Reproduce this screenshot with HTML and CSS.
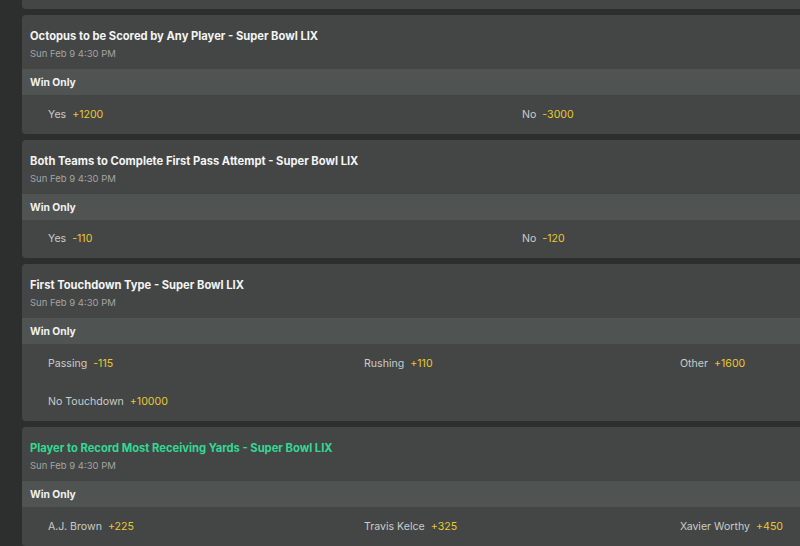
FILE: index.html
```html
<!DOCTYPE html>
<html>
<head>
<meta charset="utf-8">
<link rel="stylesheet" href="styles.css">
</head>
<body>
<div class="page">
  <div class="card card-prev"></div>

  <div class="card">
    <div class="head">
      <div class="title">Octopus to be Scored by Any Player - Super Bowl LIX</div>
      <div class="date">Sun Feb 9 4:30 PM</div>
    </div>
    <div class="bar">Win Only</div>
    <div class="grid cols-2">
      <div class="cell"><span class="name">Yes</span><span class="odds">+1200</span></div>
      <div class="cell"><span class="name">No</span><span class="odds">-3000</span></div>
    </div>
  </div>

  <div class="card">
    <div class="head">
      <div class="title">Both Teams to Complete First Pass Attempt - Super Bowl LIX</div>
      <div class="date">Sun Feb 9 4:30 PM</div>
    </div>
    <div class="bar">Win Only</div>
    <div class="grid cols-2">
      <div class="cell"><span class="name">Yes</span><span class="odds">-110</span></div>
      <div class="cell"><span class="name">No</span><span class="odds">-120</span></div>
    </div>
  </div>

  <div class="card">
    <div class="head">
      <div class="title">First Touchdown Type - Super Bowl LIX</div>
      <div class="date">Sun Feb 9 4:30 PM</div>
    </div>
    <div class="bar">Win Only</div>
    <div class="grid cols-3">
      <div class="cell"><span class="name">Passing</span><span class="odds">-115</span></div>
      <div class="cell"><span class="name">Rushing</span><span class="odds">+110</span></div>
      <div class="cell"><span class="name">Other</span><span class="odds">+1600</span></div>
      <div class="cell"><span class="name">No Touchdown</span><span class="odds">+10000</span></div>
    </div>
  </div>

  <div class="card">
    <div class="head">
      <div class="title title-active">Player to Record Most Receiving Yards - Super Bowl LIX</div>
      <div class="date">Sun Feb 9 4:30 PM</div>
    </div>
    <div class="bar">Win Only</div>
    <div class="grid cols-3">
      <div class="cell"><span class="name">A.J. Brown</span><span class="odds">+225</span></div>
      <div class="cell"><span class="name">Travis Kelce</span><span class="odds">+325</span></div>
      <div class="cell"><span class="name">Xavier Worthy</span><span class="odds">+450</span></div>
    </div>
  </div>
</div>
</body>
</html>
```

FILE: styles.css
```css
html, body {
  margin: 0;
  padding: 0;
  background: #2d2f2f;
  overflow: hidden;
}

body {
  font-family: Inter, "Liberation Sans", sans-serif;
  -webkit-font-smoothing: antialiased;
}

.page {
  display: flex;
  flex-direction: column;
  gap: 6px;
  width: 964px;
  margin-left: 22px;
  margin-top: -100px;
}

.card {
  background: #434645;
  border-radius: 4px;
  overflow: hidden;
}

.card-prev {
  height: 109px;
}

.head {
  box-sizing: border-box;
  padding: 13px 8px 0 8px;
  height: 54px;
}

.title {
  font-size: 11.2px;
  font-weight: 700;
  color: #f4f4f4;
  line-height: 16px;
}

.title-active {
  color: #33d993;
}

.date {
  margin-top: 3px;
  font-size: 9.5px;
  color: #a2a5a4;
  line-height: 14px;
}

.bar {
  background: #4f5352;
  height: 26px;
  line-height: 26px;
  padding-left: 8px;
  font-size: 10.3px;
  font-weight: 700;
  color: #f0f0f0;
}

.grid {
  display: grid;
  padding: 0 8px;
}

.cols-2 {
  grid-template-columns: repeat(2, 1fr);
}

.cols-3 {
  grid-template-columns: repeat(3, 1fr);
}

.cell {
  height: 38.5px;
  display: flex;
  align-items: center;
  padding-left: 18px;
  font-size: 10.6px;
}

.name {
  color: #c9cbca;
  margin-right: 6px;
}

.odds {
  color: #e8c932;
}
```
